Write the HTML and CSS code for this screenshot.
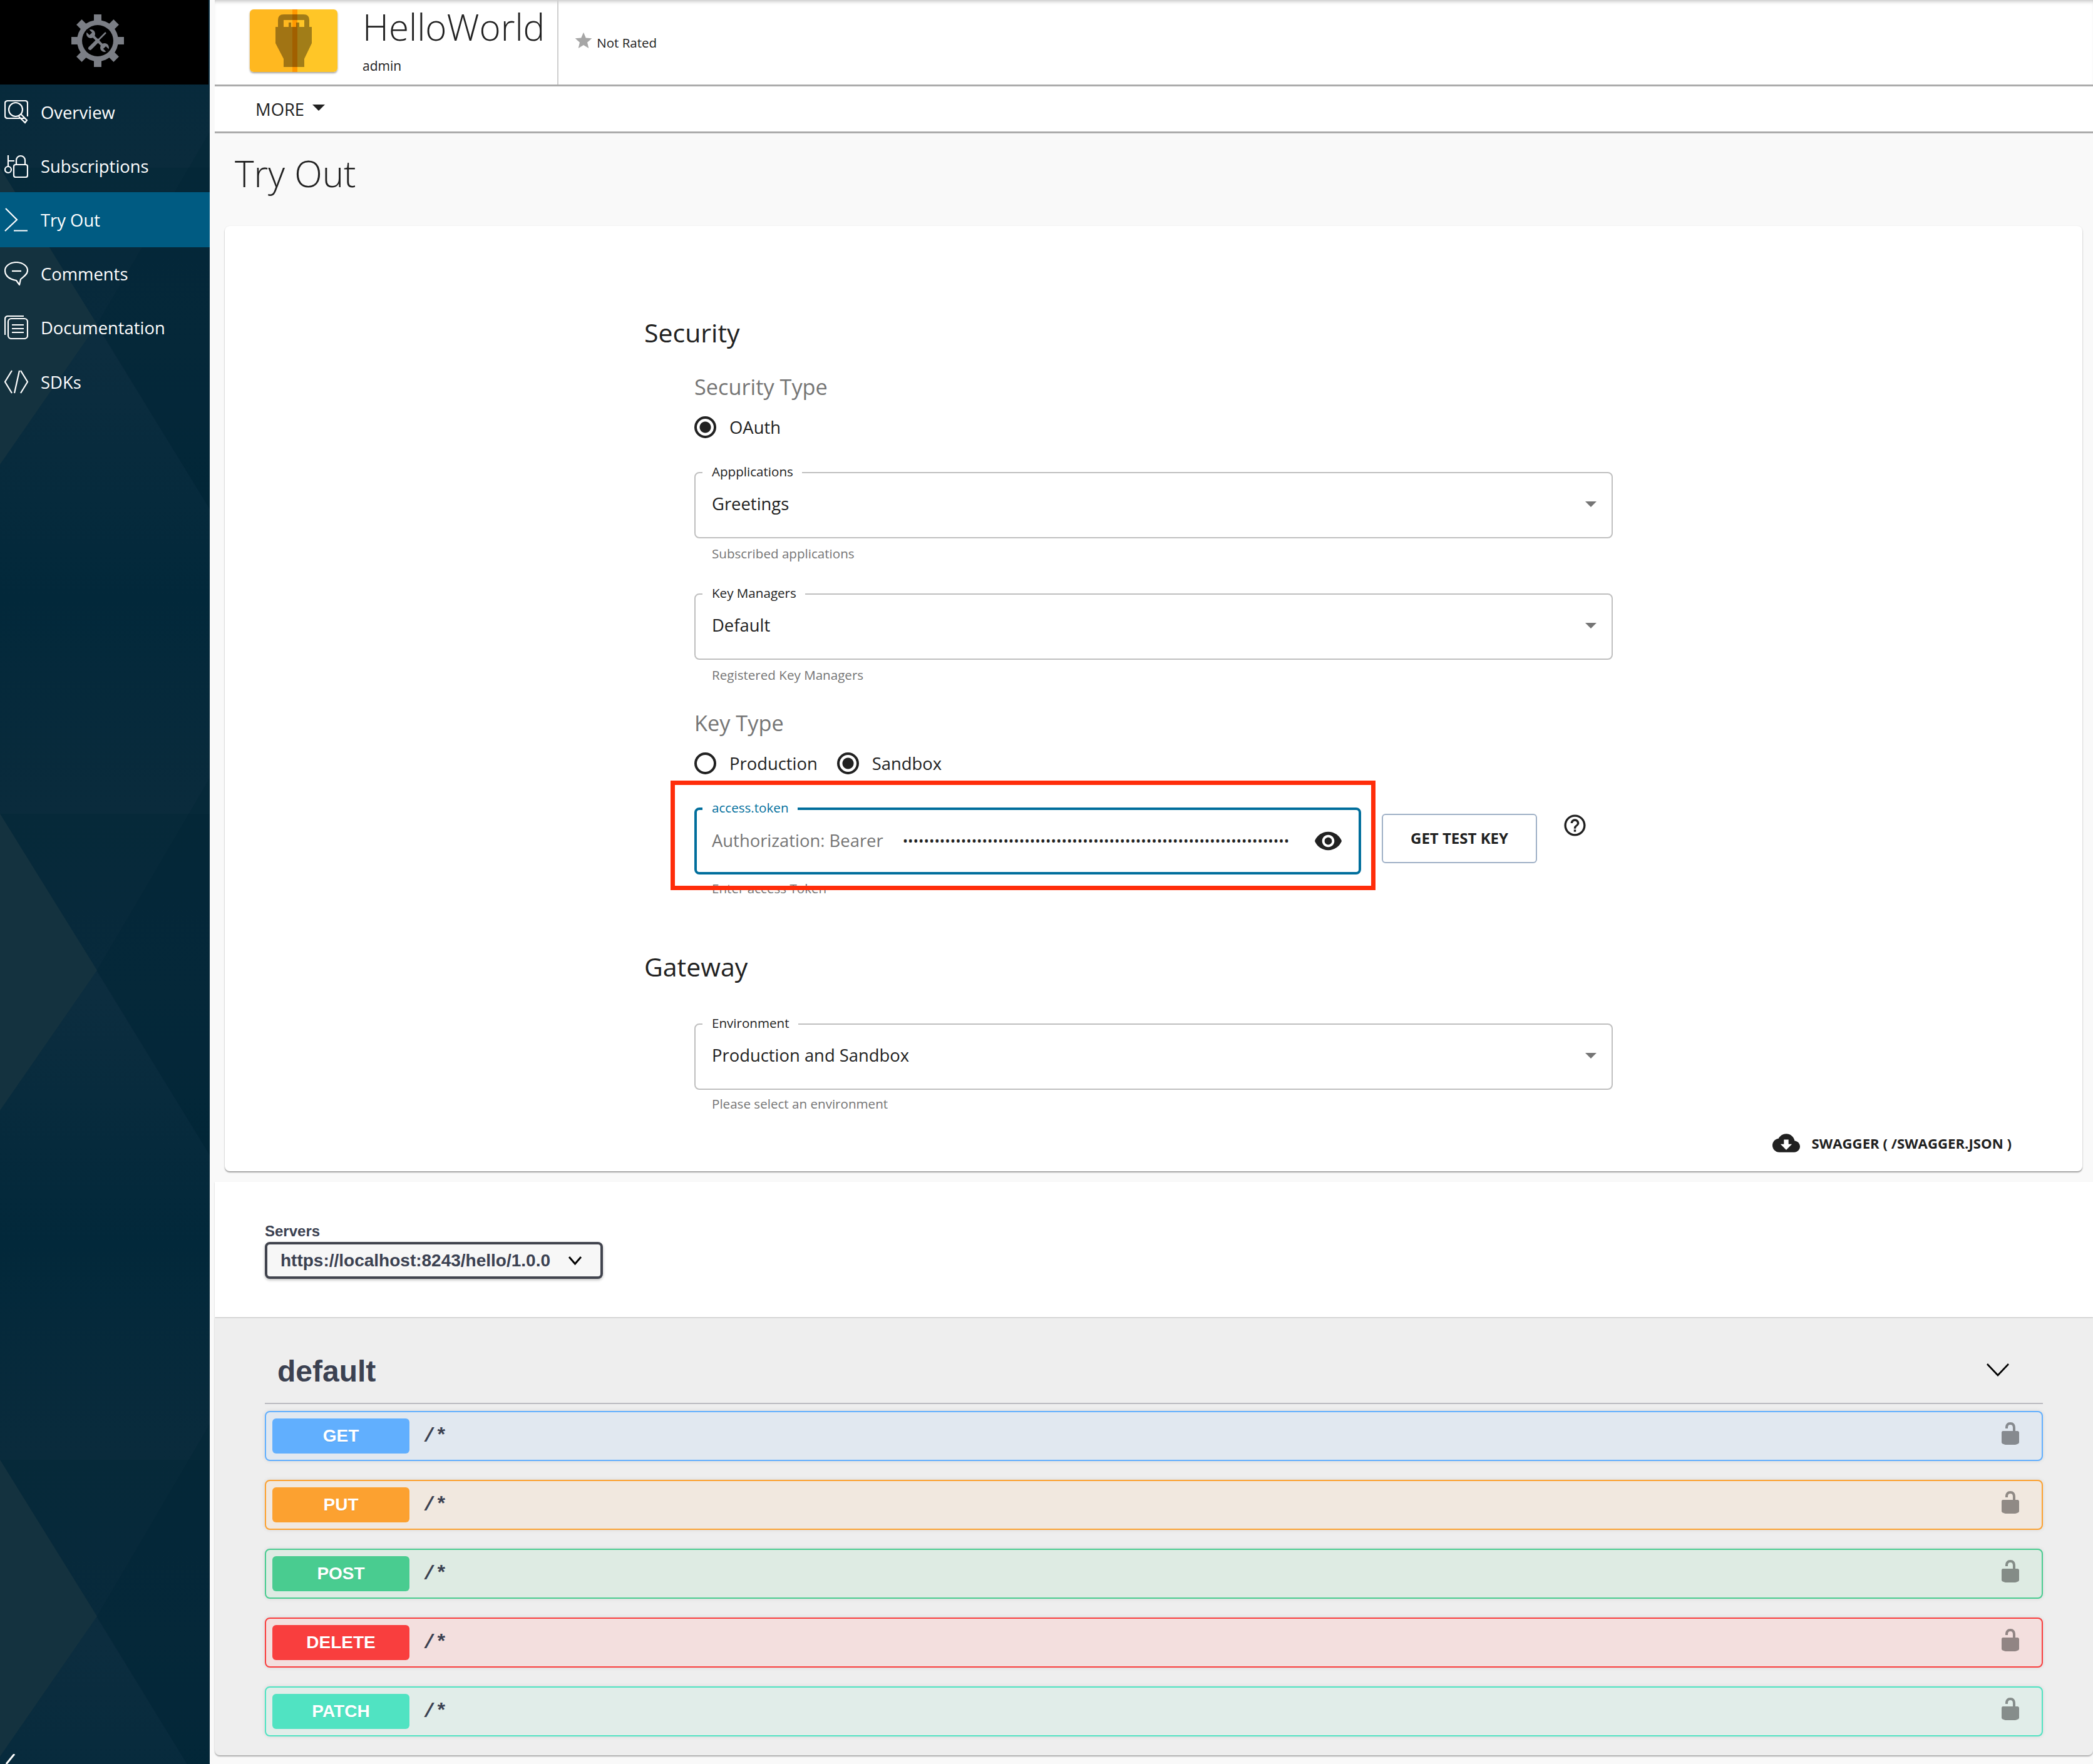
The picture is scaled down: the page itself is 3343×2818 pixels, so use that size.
FILE: index.html
```html
<!DOCTYPE html>
<html lang="en">
<head>
    <meta charset="UTF-8">
    <meta name="viewport" content="width=device-width, initial-scale=1.0">
    <title>HelloWorld - Try Out</title>
    <link rel="stylesheet" href="styles.css">
</head>
<body>
<div class="page">
    <aside class="sidebar">
        <svg class="sidebar-bg" width="335" height="2818" viewBox="0 0 335 2818">
            <defs>
                <linearGradient id="band" x1="0" y1="0" x2="0" y2="1">
                    <stop offset="0" stop-color="#0a2b3c"/>
                    <stop offset="0.28" stop-color="#0c2d3f"/>
                    <stop offset="0.665" stop-color="#02283a"/>
                    <stop offset="1" stop-color="#0a2b3c"/>
                </linearGradient>
                <g id="tile">
                    <rect width="335" height="1032" fill="url(#band)"/>
                    <polygon points="0,0 335,545 335,0" fill="#012636" fill-opacity="0.3"/>
                    <polygon points="155,250 335,-57 335,545" fill="#012535" fill-opacity="0.3"/>
                    <polygon points="0,0 155,250 0,474" fill="#14323f"/>
                </g>
            </defs>
            <use href="#tile" y="-764"/>
            <use href="#tile" y="268"/>
            <use href="#tile" y="1300"/>
            <use href="#tile" y="2332"/>
        </svg>
        <div class="sidebar-logo">
            <svg width="84" height="84" viewBox="0 0 84 84">
                <g fill="#7b7e85">
                    <rect x="36" y="0" width="12" height="84"/>
                    <rect x="0" y="36" width="84" height="12"/>
                    <rect x="36" y="0" width="12" height="84" transform="rotate(45 42 42)"/>
                    <rect x="36" y="0" width="12" height="84" transform="rotate(-45 42 42)"/>
                    <circle cx="42" cy="42" r="33"/>
                </g>
                <circle cx="42" cy="42" r="25" fill="#000"/>
                <g fill="#7b7e85" stroke="#7b7e85">
                    <path d="M30 30 L54 54" stroke-width="4"/>
                    <circle cx="31" cy="31" r="7" stroke="none"/>
                    <circle cx="53" cy="53" r="7" stroke="none"/>
                    <path d="M55 29 L42 42" stroke-width="2.5"/>
                    <path d="M42 42 L30 54" stroke-width="6" stroke-linecap="round"/>
                </g>
                <path d="M26 26 L31 31 M58 58 L53 53" stroke="#000" stroke-width="6"/>
            </svg>
        </div>
        <nav class="side-nav">
            <a class="side-item">
                <svg class="side-icon" viewBox="0 0 38 38"><path d="M33 29 H6 Q1 29 1 25 V5 Q1 1 6 1 H33 Q37 1 37 5 V26"/><circle cx="18" cy="15" r="11"/><path d="M26 22 L36 32 L33 36 L23 26"/></svg>
                <span>Overview</span>
            </a>
            <a class="side-item">
                <svg class="side-icon" viewBox="0 0 38 38"><rect x="15" y="17" width="22" height="20" rx="3"/><path d="M19 17 V10 A7 7 0 0 1 33 10 V17"/><circle cx="6" cy="25" r="5"/><path d="M6 20 V2 M6 11 H16"/></svg>
                <span>Subscriptions</span>
            </a>
            <a class="side-item active">
                <svg class="side-icon" viewBox="0 0 38 38"><path d="M2 1 L20 19 L1 37 M15 36.5 H37"/></svg>
                <span>Try Out</span>
            </a>
            <a class="side-item">
                <svg class="side-icon" viewBox="0 0 38 38"><path d="M19 1 C29 1 37 7 37 14 C37 20 31 24 26 28 L24 37 L19 30 C9 28 1 23 1 14 C1 7 9 1 19 1 Z"/><path d="M12 15 H27"/></svg>
                <span>Comments</span>
            </a>
            <a class="side-item">
                <svg class="side-icon" viewBox="0 0 38 38"><rect x="6" y="5" width="31" height="32" rx="5"/><path d="M1 31 V6 Q1 1 6 1 H31"/><path d="M12 15 H31 M12 21 H31 M12 27 H31"/></svg>
                <span>Documentation</span>
            </a>
            <a class="side-item">
                <svg class="side-icon" viewBox="0 0 38 38"><path d="M12 1 L1 19 L12 37 M24 1 L16 37 M26 1 L37 19 L26 37"/></svg>
                <span>SDKs</span>
            </a>
        </nav>
        <svg class="collapse-mark" width="30" height="16" viewBox="0 0 30 16"><path d="M23 0 L10 16" stroke="#fff" stroke-width="3" fill="none"/></svg>
    </aside>

    <main class="content">
        <header class="topbar">
            <div class="api-thumb">
                <svg width="140" height="100" viewBox="0 0 140 100">
                    <rect width="68" height="100" fill="#ffb820"/>
                    <rect x="68" width="72" height="100" fill="#ffc627"/>
                    <rect x="68" width="8" height="100" fill="#ff9800"/>
                    <path fill="#000" fill-opacity="0.37" fill-rule="evenodd" d="M45 28 V17 Q45 8 54 8 H86 Q95 8 95 17 V28 H99 V54 L87 79 V92 H54 V79 L41 54 V28 Z M54 17 V28 H62 V21 H66 V28 H74 V21 H79 V28 H87 V17 Z"/>
                </svg>
            </div>
            <div class="api-name">
                <h1>HelloWorld</h1>
                <div class="api-owner">admin</div>
            </div>
            <div class="api-rating">
                <svg width="32" height="32" viewBox="0 0 24 24"><path fill="#a6a6a6" d="M12 17.27L18.18 21l-1.64-7.03L22 9.24l-7.19-.61L12 2 9.19 8.63 2 9.24l5.46 4.73L5.82 21z"/></svg>
                <span>Not Rated</span>
            </div>
        </header>
        <div class="subnav">
            <span>MORE</span>
            <i class="caret"></i>
        </div>

        <h2 class="page-title">Try Out</h2>

        <section class="card">
            <h3 class="section-title">Security</h3>
            <div class="section-body">
                <div class="group-label">Security Type</div>
                <div class="radio-row">
                    <label class="radio checked"><i></i>OAuth</label>
                </div>

                <fieldset class="field first-field">
                    <legend>Appplications</legend>
                    <span class="field-value">Greetings</span>
                    <i class="select-arrow"></i>
                </fieldset>
                <div class="helper">Subscribed applications</div>

                <fieldset class="field">
                    <legend>Key Managers</legend>
                    <span class="field-value">Default</span>
                    <i class="select-arrow"></i>
                </fieldset>
                <div class="helper">Registered Key Managers</div>

                <div class="group-label key-type">Key Type</div>
                <div class="radio-row">
                    <label class="radio"><i></i>Production</label>
                    <label class="radio checked"><i></i>Sandbox</label>
                </div>

                <div class="token-row">
                    <fieldset class="field token-field">
                        <legend>access.token</legend>
                        <span class="token-prefix">Authorization: Bearer</span>
                        <span class="token-dots">•••••••••••••••••••••••••••••••••••••••••••••••••••••••••••••••••••••••••</span>
                        <svg class="eye" width="47" height="47" viewBox="0 0 24 24"><path fill="#212121" d="M12 4.5C7 4.5 2.73 7.61 1 12c1.73 4.39 6 7.5 11 7.5s9.27-3.11 11-7.5c-1.73-4.39-6-7.5-11-7.5zM12 17c-2.76 0-5-2.24-5-5s2.24-5 5-5 5 2.24 5 5-2.24 5-5 5zm0-8c-1.66 0-3 1.34-3 3s1.34 3 3 3 3-1.34 3-3-1.34-3-3-3z"/></svg>
                    </fieldset>
                    <button class="test-key">GET TEST KEY</button>
                    <svg class="help" width="41" height="41" viewBox="0 0 24 24"><path fill="#212121" d="M11 18h2v-2h-2v2zm1-16C6.48 2 2 6.48 2 12s4.48 10 10 10 10-4.48 10-10S17.52 2 12 2zm0 18c-4.41 0-8-3.59-8-8s3.59-8 8-8 8 3.59 8 8-3.59 8-8 8zm0-14c-2.21 0-4 1.79-4 4h2c0-1.1.9-2 2-2s2 .9 2 2c0 2-3 1.75-3 5h2c0-2.25 3-2.5 3-5 0-2.21-1.79-4-4-4z"/></svg>
                    <div class="highlight"></div>
                </div>
                <div class="helper token-helper">Enter access Token</div>
            </div>

            <h3 class="section-title gateway">Gateway</h3>
            <div class="section-body">
                <fieldset class="field env-field">
                    <legend>Environment</legend>
                    <span class="field-value">Production and Sandbox</span>
                    <i class="select-arrow"></i>
                </fieldset>
                <div class="helper">Please select an environment</div>
            </div>

            <div class="swagger-link">
                <svg width="44" height="44" viewBox="0 0 24 24"><path fill="#212121" d="M19.35 10.04C18.67 6.59 15.64 4 12 4 9.11 4 6.6 5.64 5.35 8.04 2.34 8.36 0 10.91 0 14c0 3.31 2.69 6 6 6h13c2.76 0 5-2.24 5-5 0-2.64-2.05-4.78-4.65-4.96zM17 13l-5 5-5-5h3V9h4v4h3z"/></svg>
                <span>SWAGGER ( /SWAGGER.JSON )</span>
            </div>
        </section>

        <section class="servers">
            <div class="servers-label">Servers</div>
            <div class="servers-select">
                <span>https://localhost:8243/hello/1.0.0</span>
                <svg width="27" height="27" viewBox="0 0 20 20"><path d="M3 6 L10 14 L17 6" stroke="#000" stroke-width="2.2" fill="none"/></svg>
            </div>
        </section>

        <section class="operations">
            <div class="tag-row">
                <span class="tag-name">default</span>
                <svg class="tag-arrow" width="36" height="22" viewBox="0 0 36 22"><path d="M1 2 L18 20 L35 2" stroke="#000" stroke-width="2.6" fill="none"/></svg>
            </div>

            <div class="op op-get">
                <span class="method">GET</span><span class="op-path">/*</span>
                <svg class="lock" width="40" height="40" viewBox="0 0 20 20"><path d="M15.8 8H14V5.6C14 2.703 12.665 1 10 1 7.334 1 6 2.703 6 5.6V6h2v-.801C8 3.754 8.797 3 10 3c1.203 0 2 .754 2 2.199V8H4c-.553 0-1 .646-1 1.199V17c0 .549.428 1.139.951 1.307l1.197.387C5.672 18.861 6.55 19 7.1 19h5.8c.549 0 1.428-.139 1.951-.307l1.196-.387c.524-.167.953-.757.953-1.306V9.199C17 8.646 16.352 8 15.8 8z"/></svg>
            </div>
            <div class="op op-put">
                <span class="method">PUT</span><span class="op-path">/*</span>
                <svg class="lock" width="40" height="40" viewBox="0 0 20 20"><path d="M15.8 8H14V5.6C14 2.703 12.665 1 10 1 7.334 1 6 2.703 6 5.6V6h2v-.801C8 3.754 8.797 3 10 3c1.203 0 2 .754 2 2.199V8H4c-.553 0-1 .646-1 1.199V17c0 .549.428 1.139.951 1.307l1.197.387C5.672 18.861 6.55 19 7.1 19h5.8c.549 0 1.428-.139 1.951-.307l1.196-.387c.524-.167.953-.757.953-1.306V9.199C17 8.646 16.352 8 15.8 8z"/></svg>
            </div>
            <div class="op op-post">
                <span class="method">POST</span><span class="op-path">/*</span>
                <svg class="lock" width="40" height="40" viewBox="0 0 20 20"><path d="M15.8 8H14V5.6C14 2.703 12.665 1 10 1 7.334 1 6 2.703 6 5.6V6h2v-.801C8 3.754 8.797 3 10 3c1.203 0 2 .754 2 2.199V8H4c-.553 0-1 .646-1 1.199V17c0 .549.428 1.139.951 1.307l1.197.387C5.672 18.861 6.55 19 7.1 19h5.8c.549 0 1.428-.139 1.951-.307l1.196-.387c.524-.167.953-.757.953-1.306V9.199C17 8.646 16.352 8 15.8 8z"/></svg>
            </div>
            <div class="op op-delete">
                <span class="method">DELETE</span><span class="op-path">/*</span>
                <svg class="lock" width="40" height="40" viewBox="0 0 20 20"><path d="M15.8 8H14V5.6C14 2.703 12.665 1 10 1 7.334 1 6 2.703 6 5.6V6h2v-.801C8 3.754 8.797 3 10 3c1.203 0 2 .754 2 2.199V8H4c-.553 0-1 .646-1 1.199V17c0 .549.428 1.139.951 1.307l1.197.387C5.672 18.861 6.55 19 7.1 19h5.8c.549 0 1.428-.139 1.951-.307l1.196-.387c.524-.167.953-.757.953-1.306V9.199C17 8.646 16.352 8 15.8 8z"/></svg>
            </div>
            <div class="op op-patch">
                <span class="method">PATCH</span><span class="op-path">/*</span>
                <svg class="lock" width="40" height="40" viewBox="0 0 20 20"><path d="M15.8 8H14V5.6C14 2.703 12.665 1 10 1 7.334 1 6 2.703 6 5.6V6h2v-.801C8 3.754 8.797 3 10 3c1.203 0 2 .754 2 2.199V8H4c-.553 0-1 .646-1 1.199V17c0 .549.428 1.139.951 1.307l1.197.387C5.672 18.861 6.55 19 7.1 19h5.8c.549 0 1.428-.139 1.951-.307l1.196-.387c.524-.167.953-.757.953-1.306V9.199C17 8.646 16.352 8 15.8 8z"/></svg>
            </div>
        </section>
    </main>
</div>
</body>
</html>
```

FILE: styles.css
```css
html, body {
    margin: 0;
    padding: 0;
    height: 100%;
    overflow: hidden;
}

body {
    font-family: "Open Sans", Arial, sans-serif;
    color: #212121;
    background-color: #f9f9f9;
}

.page {
    display: flex;
    height: 2818px;
    overflow: hidden;
}

/* sidebar */
.sidebar {
    position: relative;
    flex: 0 0 335px;
    width: 335px;
    overflow: hidden;
    background-color: #03283a;
}

.sidebar-bg {
    position: absolute;
    top: 0;
    left: 0;
}

.sidebar-logo {
    position: relative;
    display: flex;
    justify-content: center;
    height: 135px;
    padding-top: 23px;
    padding-right: 22px;
    box-sizing: border-box;
    margin-right: 2px;
    background-color: #000;
}

.side-nav {
    position: relative;
    padding-top: 1px;
}

.side-item {
    display: flex;
    align-items: center;
    gap: 20px;
    height: 86px;
    padding-left: 7px;
    font-size: 27.4px;
    color: #fff;
}

.side-item:last-child {
    margin-top: 1px;
}

.side-item.active {
    height: 88px;
    margin: -1px 0;
    background-color: #005b82;
}

.side-icon {
    flex: 0 0 38px;
    width: 38px;
    height: 38px;
    fill: none;
    stroke: #fff;
    stroke-width: 2.2;
}

.collapse-mark {
    position: absolute;
    left: 0;
    bottom: 0;
}

/* main column */
.content {
    flex: 1;
    min-width: 0;
}

.topbar {
    display: flex;
    height: 135px;
    margin-left: 8px;
    padding-left: 56px;
    background-color: #fff;
    border-bottom: 3px solid #ababab;
    box-shadow: inset 0 6px 6px -4px rgba(0, 0, 0, 0.25);
}

.api-thumb {
    margin-top: 15px;
    height: 100px;
}

.api-thumb svg {
    display: block;
    border-radius: 6px;
    box-shadow: 0 2px 3px rgba(0, 0, 0, 0.35);
}

.api-name {
    margin-left: 40px;
    padding-right: 20px;
    border-right: 2px solid #cfcfcf;
}

.api-name h1 {
    margin: 6px 0 0;
    font-size: 58.3px;
    font-weight: 300;
    line-height: 74px;
}

.api-owner {
    margin-top: 10px;
    font-size: 21px;
    line-height: 30px;
}

.api-rating {
    display: flex;
    align-items: center;
    gap: 5px;
    height: 36px;
    margin-top: 50px;
    margin-left: 24px;
    font-size: 20.5px;
}

.api-rating svg {
    margin-bottom: 6px;
}

.subnav {
    display: flex;
    align-items: center;
    height: 72px;
    margin-left: 8px;
    padding-left: 65px;
    font-size: 27.4px;
    background-color: #fff;
    border-bottom: 3px solid #ababab;
}

.caret {
    width: 0;
    height: 0;
    margin-left: 13px;
    margin-bottom: 4px;
    border-left: 10px solid transparent;
    border-right: 10px solid transparent;
    border-top: 10px solid #212121;
}

.page-title {
    margin: 24px 0 0 40px;
    font-size: 58.3px;
    font-weight: 300;
    line-height: 80px;
}

/* try out card */
.card {
    position: relative;
    width: 2967px;
    height: 1510px;
    margin: 44px 0 0 24px;
    padding-top: 145px;
    box-sizing: border-box;
    background-color: #fff;
    border-radius: 8px;
    box-shadow: 0 2px 2px rgba(0, 0, 0, 0.35), 0 0 2px rgba(0, 0, 0, 0.08);
}

.section-title {
    margin: 0 0 0 670px;
    font-size: 41px;
    font-weight: 400;
    line-height: 50px;
}

.section-title.gateway {
    margin-top: 88px;
}

.section-body {
    width: 1467px;
    margin-left: 750px;
    padding-top: 42px;
}

.group-label {
    font-size: 34.3px;
    line-height: 40px;
    color: #757575;
}

.group-label.key-type {
    margin-top: 45px;
}

.radio-row {
    display: flex;
    gap: 31px;
    margin-top: 24px;
}

.radio {
    display: flex;
    align-items: center;
    height: 40px;
    font-size: 27.4px;
}

.radio i {
    width: 35px;
    height: 35px;
    margin-right: 21px;
    border: 4px solid #212121;
    border-radius: 50%;
    box-sizing: border-box;
}

.radio.checked i {
    background: radial-gradient(circle, #212121 0, #212121 8.5px, transparent 9.5px);
}

.field {
    position: relative;
    display: flex;
    align-items: center;
    height: 117px;
    min-width: 0;
    margin: 41px 0 0;
    padding: 0 26px;
    box-sizing: border-box;
    border: 2px solid #bfbfbf;
    border-radius: 8px;
}

.env-field {
    margin-top: 13px;
}

.field legend {
    position: relative;
    top: -2px;
    padding: 0 14px 0 15px;
    margin-left: -15px;
    font-size: 20.6px;
    line-height: 24px;
}

.field-value {
    font-size: 27.4px;
    line-height: 40px;
    margin-bottom: 16px;
}

.select-arrow {
    position: absolute;
    right: 24px;
    top: 34px;
    width: 0;
    height: 0;
    border-left: 9px solid transparent;
    border-right: 9px solid transparent;
    border-top: 9px solid #757575;
}

.helper {
    margin-top: 12px;
    padding-left: 28px;
    font-size: 20.6px;
    line-height: 24px;
    color: #757575;
}

.token-helper {
    margin-top: 10px;
}

.env-field + .helper {
    margin-top: 10px;
}

.token-row {
    position: relative;
    display: flex;
    align-items: flex-start;
    margin-top: 41px;
}

.token-field {
    flex: 0 0 1065px;
    width: 1065px;
    height: 117px;
    margin: 0;
    padding-left: 24px;
    border: 4px solid #006e9c;
}

.token-field legend {
    top: -2px;
    color: #006e9c;
}

.token-prefix {
    font-size: 27.4px;
    color: #757575;
    margin-bottom: 12px;
}

.token-dots {
    margin-left: 31px;
    margin-bottom: 12px;
    font-size: 22.5px;
    font-weight: 400;
    white-space: nowrap;
}

.eye {
    position: absolute;
    right: 25px;
    top: 16px;
}

.test-key {
    flex: 0 0 248px;
    width: 248px;
    height: 79px;
    margin: 20px 0 0 33px;
    padding: 0 0 3px;
    font-family: "Open Sans", Arial, sans-serif;
    font-size: 24px;
    font-weight: 700;
    color: #212121;
    background-color: #fff;
    border: 2px solid #9fb0c6;
    border-radius: 6px;
}

.help {
    flex: 0 0 41px;
    margin: 18px 0 0 40px;
}

.highlight {
    position: absolute;
    left: -38px;
    top: -33px;
    width: 1126px;
    height: 175px;
    box-sizing: border-box;
    border: 7px solid #ff2d0a;
    z-index: 2;
}

.swagger-link {
    display: flex;
    align-items: center;
    justify-content: flex-end;
    gap: 19px;
    height: 30px;
    margin-top: 36px;
    padding-right: 113px;
    font-size: 22.2px;
    font-weight: 700;
}

/* swagger ui part */
.servers {
    height: 216px;
    margin: 17px 0 0 8px;
    padding: 65px 0 0 80px;
    box-sizing: border-box;
    background-color: #fff;
    box-shadow: 0 1px 2px rgba(0, 0, 0, 0.2);
    position: relative;
}

.servers-label {
    font-family: "Liberation Sans", Arial, sans-serif;
    font-size: 24px;
    font-weight: 700;
    line-height: 28px;
    color: #3b4151;
}

.servers-select {
    display: flex;
    align-items: center;
    justify-content: space-between;
    width: 540px;
    height: 59px;
    margin-top: 3px;
    padding: 0 27px 0 21px;
    box-sizing: border-box;
    font-family: "Liberation Sans", Arial, sans-serif;
    font-size: 28px;
    font-weight: 700;
    color: #3b4151;
    background-color: #f7f7f7;
    border: 4px solid #41444e;
    border-radius: 8px;
    box-shadow: 0 2px 4px rgba(0, 0, 0, 0.25);
}

.operations {
    height: 700px;
    margin-left: 8px;
    padding: 0 80px;
    box-sizing: border-box;
    background-color: #eee;
    border-radius: 0 0 8px 8px;
    box-shadow: 0 2px 2px rgba(0, 0, 0, 0.3);
}

.tag-row {
    display: flex;
    align-items: center;
    justify-content: space-between;
    height: 139px;
    padding: 35px 54px 0 20px;
    box-sizing: border-box;
    border-bottom: 2px solid #bbbbc0;
}

.tag-name {
    font-family: "Liberation Sans", Arial, sans-serif;
    font-size: 48px;
    font-weight: 700;
    color: #3b4151;
}

.tag-arrow {
    margin-bottom: 4px;
}

.op {
    display: flex;
    align-items: center;
    height: 80px;
    margin-top: 30px;
    padding: 0 30px 0 10px;
    box-sizing: border-box;
    border: 2px solid;
    border-radius: 8px;
    box-shadow: 0 0 6px rgba(0, 0, 0, 0.1);
}

.tag-row + .op {
    margin-top: 11px;
}

.method {
    flex: 0 0 219px;
    height: 56px;
    font-family: "Liberation Sans", Arial, sans-serif;
    font-size: 28px;
    font-weight: 700;
    line-height: 56px;
    text-align: center;
    color: #fff;
    border-radius: 6px;
    text-shadow: 0 1px 0 rgba(0, 0, 0, 0.1);
}

.op-path {
    margin-left: 22px;
    font-family: "Liberation Mono", "Courier New", monospace;
    font-size: 32px;
    font-weight: 700;
    color: #3b4151;
}

.lock {
    margin-left: auto;
    margin-bottom: 8px;
    fill: #000;
    opacity: 0.4;
}

.op-get { background-color: #e1e8f0; border-color: #61affe; }
.op-get .method { background-color: #61affe; }
.op-put { background-color: #f1e8df; border-color: #fca130; }
.op-put .method { background-color: #fca130; }
.op-post { background-color: #deebe3; border-color: #49cc90; }
.op-post .method { background-color: #49cc90; }
.op-delete { background-color: #f3dfde; border-color: #f93e3e; }
.op-delete .method { background-color: #f93e3e; }
.op-patch { background-color: #e1ede9; border-color: #50e3c2; }
.op-patch .method { background-color: #50e3c2; }
```
